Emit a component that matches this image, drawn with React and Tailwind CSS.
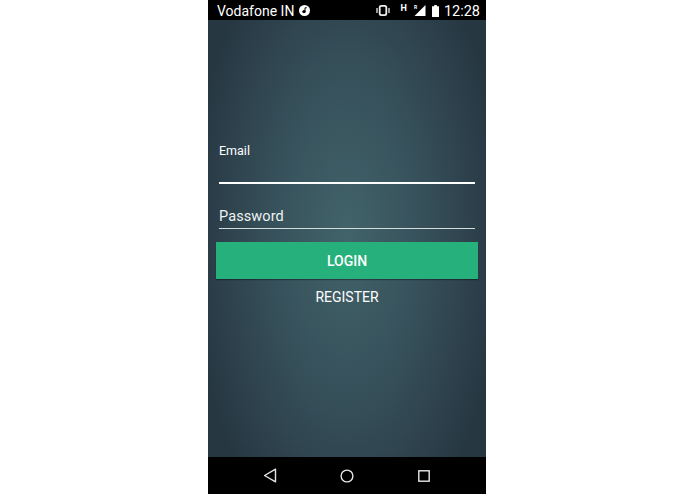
import React from 'react';

const StatusIcons = () => (
  <div className="flex items-center pt-[1px]">
    <svg width="14" height="11" viewBox="0 0 14 11" className="mr-[11px]" fill="none">
      <rect x="3.7" y="0.9" width="6.6" height="9.2" rx="1.6" stroke="#f0f0f0" strokeWidth="1.8" />
      <path d="M1 3v5M13 3v5" stroke="#c8c8c8" strokeWidth="1.5" />
    </svg>
    <span className="text-[9px] font-bold leading-none text-white mr-[7px] mb-[5px]">H</span>
    <div className="relative w-[12px] h-[11px] mr-[6px]">
      <svg width="12" height="11" viewBox="0 0 12 11" className="absolute inset-0">
        <path d="M11.5 0V11H0.5Z" fill="#fff" />
      </svg>
      <span className="absolute left-0 top-0 text-[5px] font-bold leading-none text-white">R</span>
    </div>
    <svg width="7" height="12" viewBox="0 0 7 12" className="mr-[5px]">
      <path d="M2.2 0h2.6v1.2H7V12H0V1.2h2.2Z" fill="#fff" />
    </svg>
    <span className="text-[14.5px] leading-[15px] pt-[2px] text-white">12:28</span>
  </div>
);

const NavBar = () => (
  <div className="h-[37px] bg-black flex items-center justify-center gap-[63px]">
    <svg width="14" height="15" viewBox="0 0 14 15" fill="none">
      <path d="M12.5 1.2V13.8L1.6 7.5Z" stroke="#e6e6e6" strokeWidth="1.4" strokeLinejoin="round" />
    </svg>
    <svg width="14" height="14" viewBox="0 0 14 14" fill="none">
      <circle cx="7" cy="7" r="5.9" stroke="#e6e6e6" strokeWidth="1.4" />
    </svg>
    <svg width="14" height="14" viewBox="0 0 14 14" fill="none">
      <rect x="1.8" y="1.8" width="10.4" height="10.4" stroke="#e6e6e6" strokeWidth="1.4" />
    </svg>
  </div>
);

export default function App() {
  return (
    <div className="h-[494px] bg-white flex justify-center pr-px font-['Roboto',sans-serif]">
      <div className="w-[278px] flex flex-col">
        <div className="h-5 bg-black flex items-center justify-between pl-[9px] pr-[6px]">
          <div className="flex items-center gap-[5px] pt-[1px]">
            <span className="text-[14px] leading-none text-white">Vodafone IN</span>
            <svg width="11" height="11" viewBox="0 0 11 11">
              <circle cx="5.5" cy="5.5" r="5.5" fill="#fff" />
              <circle cx="5" cy="6.6" r="1.7" fill="#000" />
              <path d="M6 6.6V2.8h1.8" stroke="#000" strokeWidth="1" fill="none" />
            </svg>
          </div>
          <StatusIcons />
        </div>

        <div className="flex-1 flex flex-col pt-[123px] px-[8px] bg-[radial-gradient(ellipse_56%_75%_at_50%_49%,#42636a_0%,#36505a_50%,#273742_100%)]">
          <div className="px-[3px]">
            <label className="block text-[12.5px] leading-[15px] text-white">Email</label>
            <div className="mt-[24px] h-[2px] bg-white" />
            <div className="mt-[24px] text-[14.5px] leading-[17px] tracking-[0.1px] text-[#eef2f2]">Password</div>
            <div className="mt-[3px] h-px bg-[#d5dcdd]" />
          </div>
          <button className="mt-[13px] h-[37px] pt-[2px] bg-[#26b17c] text-white text-[14px] font-medium shadow-[0_1px_1px_rgba(0,0,0,0.35)]">
            LOGIN
          </button>
          <button className="mt-[9px] h-[19px] text-[14px] leading-[19px] text-white">REGISTER</button>
        </div>

        <NavBar />
      </div>
    </div>
  );
}
